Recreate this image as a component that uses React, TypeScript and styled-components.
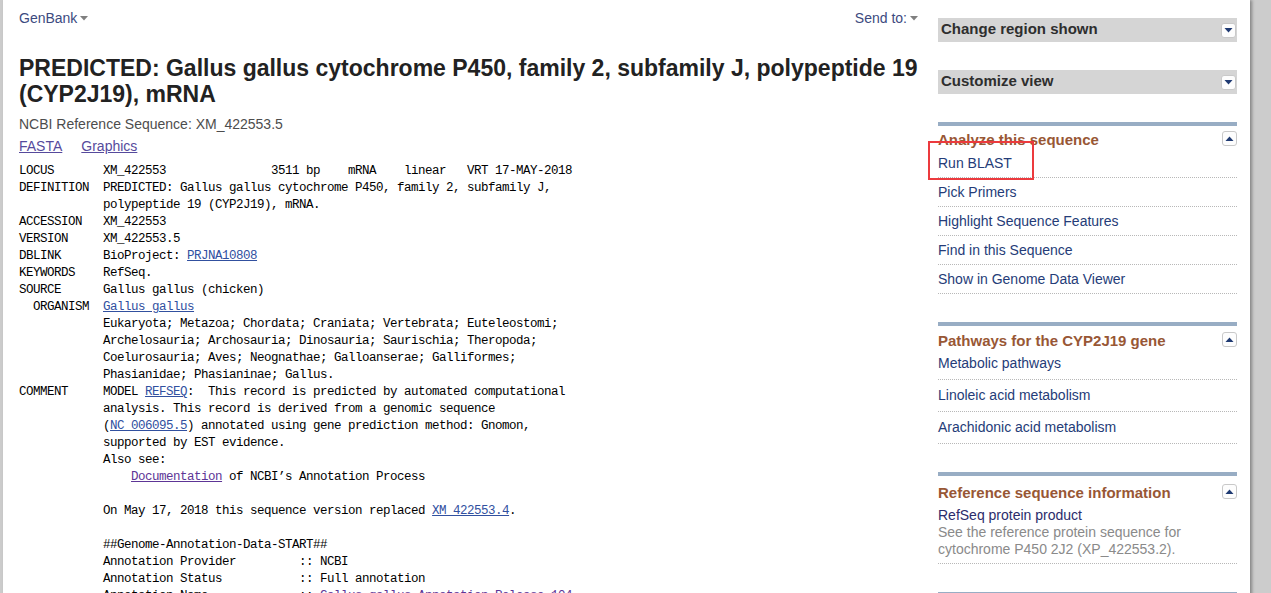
import React from "react";
import styled, { createGlobalStyle } from "styled-components";

const Global = createGlobalStyle`
  html, body { margin: 0; padding: 0; }
  body {
    background: #cccccc;
    font-family: "Liberation Sans", Arial, sans-serif;
    overflow: hidden;
  }
`;

const Page = styled.div`
  margin-left: 3px;
  width: 1247px;
  min-height: 593px;
  background: #ffffff;
  box-shadow: 2px 0 3px rgba(0, 0, 0, 0.35);
  display: flex;
  padding: 0 13px 0 16px;
  box-sizing: border-box;
  gap: 20px;
`;

const Main = styled.div`
  flex: 1;
  min-width: 0;
`;

const TopBar = styled.div`
  display: flex;
  justify-content: space-between;
  align-items: center;
  padding-top: 10px;
  height: 16px;
`;

const Menu = styled.span`
  font-size: 14px;
  line-height: 16px;
  color: #3c4a80;
  display: inline-flex;
  align-items: center;
  gap: 3px;
`;

const Title = styled.h1`
  margin: 29px 0 0;
  font-size: 23px;
  line-height: 26px;
  font-weight: bold;
  color: #222222;
`;

const SubTitle = styled.div`
  margin-top: 9px;
  font-size: 14px;
  line-height: 17px;
  color: #4d4d4d;
`;

const LinkRow = styled.div`
  margin-top: 5px;
  display: flex;
  gap: 19px;
  font-size: 14px;
  line-height: 17px;
`;

const TopLink = styled.a`
  color: #564a9c;
  text-decoration: underline;
`;

const Pre = styled.pre`
  margin: 8px 0 0;
  font-family: "Liberation Mono", "Courier New", monospace;
  font-size: 12.5px;
  letter-spacing: -0.5px;
  line-height: 17px;
  color: #000000;
`;

const PreLink = styled.a<{ $visited?: boolean }>`
  color: ${(p) => (p.$visited ? "#5d3596" : "#31509f")};
  text-decoration: underline;
`;

const Sidebar = styled.div`
  width: 299px;
  flex-shrink: 0;
  padding-top: 18px;
`;

const CollapsedHeader = styled.div`
  height: 24px;
  background: #d5d5d5;
  display: flex;
  align-items: center;
  justify-content: space-between;
  padding: 0 1px 0 3px;
  margin-bottom: 28px;
`;

const HeaderText = styled.span`
  font-size: 15px;
  line-height: 18px;
  font-weight: bold;
  color: #2e2e2e;
  margin-top: -2px;
`;

const ToggleButton = styled.span`
  width: 13px;
  height: 13px;
  background: #fdfdfd;
  border: 1px solid #c9c9c9;
  border-radius: 3px;
  display: flex;
  align-items: center;
  justify-content: center;
  box-sizing: content-box;
`;

const Section = styled.div`
  border-top: 4px solid #98adc4;
  margin-bottom: 28px;
`;

const SectionHead = styled.div<{ $top: number }>`
  display: flex;
  justify-content: space-between;
  align-items: flex-start;
  margin-top: ${(p) => p.$top}px;
`;

const SectionTitle = styled.span`
  font-size: 15px;
  line-height: 18px;
  font-weight: bold;
  color: #985735;
`;

const List = styled.ul`
  list-style: none;
  margin: 0;
  padding: 0;
`;

const Item = styled.li<{ $pad: number; $bottom: number; $first?: number }>`
  position: relative;
  padding: ${(p) => p.$pad}px 0 ${(p) => p.$bottom}px;
  border-bottom: 1px dotted #b8b8b8;
  font-size: 14px;
  line-height: 17px;
  &:first-child {
    padding-top: ${(p) => p.$first ?? p.$pad}px;
  }
`;

const SideLink = styled.a`
  color: #253c78;
  text-decoration: none;
`;

const ProductLink = styled.a`
  color: #2b2c6b;
  text-decoration: none;
  display: block;
`;

const Desc = styled.div`
  color: #8a8a8a;
`;

const Highlight = styled.div`
  position: absolute;
  left: -10px;
  top: -8px;
  width: 106px;
  height: 39px;
  border: 2px solid #ec3a3e;
  box-sizing: border-box;
  pointer-events: none;
`;

const Caret = () => (
  <svg width="8" height="5" viewBox="0 0 8 5">
    <path d="M0 0 L8 0 L4 4.5 Z" fill="#808080" />
  </svg>
);

const Down = () => (
  <svg width="9" height="6" viewBox="0 0 9 6">
    <path d="M0.5 1 L8.5 1 L4.5 5.5 Z" fill="#1f3a72" />
  </svg>
);

const Up = () => (
  <svg width="9" height="6" viewBox="0 0 9 6">
    <path d="M0.5 5 L8.5 5 L4.5 0.5 Z" fill="#1f3a72" />
  </svg>
);

const analyzeLinks = [
  "Pick Primers",
  "Highlight Sequence Features",
  "Find in this Sequence",
  "Show in Genome Data Viewer",
];

const pathwayLinks = [
  "Metabolic pathways",
  "Linoleic acid metabolism",
  "Arachidonic acid metabolism",
];

export default function App() {
  return (
    <>
      <Global />
      <Page>
        <Main>
          <TopBar>
            <Menu>
              GenBank <Caret />
            </Menu>
            <Menu>
              Send to: <Caret />
            </Menu>
          </TopBar>
          <Title>
            PREDICTED: Gallus gallus cytochrome P450, family 2, subfamily J, polypeptide 19
            (CYP2J19), mRNA
          </Title>
          <SubTitle>NCBI Reference Sequence: XM_422553.5</SubTitle>
          <LinkRow>
            <TopLink href="#">FASTA</TopLink>
            <TopLink href="#">Graphics</TopLink>
          </LinkRow>
          <Pre>
{`LOCUS       XM_422553               3511 bp    mRNA    linear   VRT 17-MAY-2018
DEFINITION  PREDICTED: Gallus gallus cytochrome P450, family 2, subfamily J,
            polypeptide 19 (CYP2J19), mRNA.
ACCESSION   XM_422553
VERSION     XM_422553.5
DBLINK      BioProject: `}<PreLink href="#">PRJNA10808</PreLink>{`
KEYWORDS    RefSeq.
SOURCE      Gallus gallus (chicken)
  ORGANISM  `}<PreLink href="#">Gallus gallus</PreLink>{`
            Eukaryota; Metazoa; Chordata; Craniata; Vertebrata; Euteleostomi;
            Archelosauria; Archosauria; Dinosauria; Saurischia; Theropoda;
            Coelurosauria; Aves; Neognathae; Galloanserae; Galliformes;
            Phasianidae; Phasianinae; Gallus.
COMMENT     MODEL `}<PreLink href="#">REFSEQ</PreLink>{`:  This record is predicted by automated computational
            analysis. This record is derived from a genomic sequence
            (`}<PreLink href="#">NC_006095.5</PreLink>{`) annotated using gene prediction method: Gnomon,
            supported by EST evidence.
            Also see:
                `}<PreLink href="#" $visited>Documentation</PreLink>{` of NCBI’s Annotation Process

            On May 17, 2018 this sequence version replaced `}<PreLink href="#">XM_422553.4</PreLink>{`.

            ##Genome-Annotation-Data-START##
            Annotation Provider         :: NCBI
            Annotation Status           :: Full annotation
            Annotation Name             :: `}<PreLink href="#" $visited>Gallus gallus Annotation Release 104</PreLink>
          </Pre>
        </Main>
        <Sidebar>
          <CollapsedHeader>
            <HeaderText>Change region shown</HeaderText>
            <ToggleButton>
              <Down />
            </ToggleButton>
          </CollapsedHeader>
          <CollapsedHeader>
            <HeaderText>Customize view</HeaderText>
            <ToggleButton>
              <Down />
            </ToggleButton>
          </CollapsedHeader>

          <Section>
            <SectionHead $top={5}>
              <SectionTitle>Analyze this sequence</SectionTitle>
              <ToggleButton>
                <Up />
              </ToggleButton>
            </SectionHead>
            <List>
              <Item $pad={6} $bottom={5} $first={6}>
                <SideLink href="#">Run BLAST</SideLink>
                <Highlight />
              </Item>
              {analyzeLinks.map((t) => (
                <Item key={t} $pad={6} $bottom={5}>
                  <SideLink href="#">{t}</SideLink>
                </Item>
              ))}
            </List>
          </Section>

          <Section>
            <SectionHead $top={6}>
              <SectionTitle>Pathways for the CYP2J19 gene</SectionTitle>
              <ToggleButton>
                <Up />
              </ToggleButton>
            </SectionHead>
            <List>
              {pathwayLinks.map((t) => (
                <Item key={t} $pad={7} $bottom={7} $first={5}>
                  <SideLink href="#">{t}</SideLink>
                </Item>
              ))}
            </List>
          </Section>

          <Section>
            <SectionHead $top={8}>
              <SectionTitle>Reference sequence information</SectionTitle>
              <ToggleButton>
                <Up />
              </ToggleButton>
            </SectionHead>
            <List>
              <Item $pad={6} $bottom={5} $first={5}>
                <ProductLink href="#">RefSeq protein product</ProductLink>
                <Desc>
                  See the reference protein sequence for cytochrome P450 2J2 (XP_422553.2).
                </Desc>
              </Item>
            </List>
          </Section>
          <Section />
        </Sidebar>
      </Page>
    </>
  );
}
